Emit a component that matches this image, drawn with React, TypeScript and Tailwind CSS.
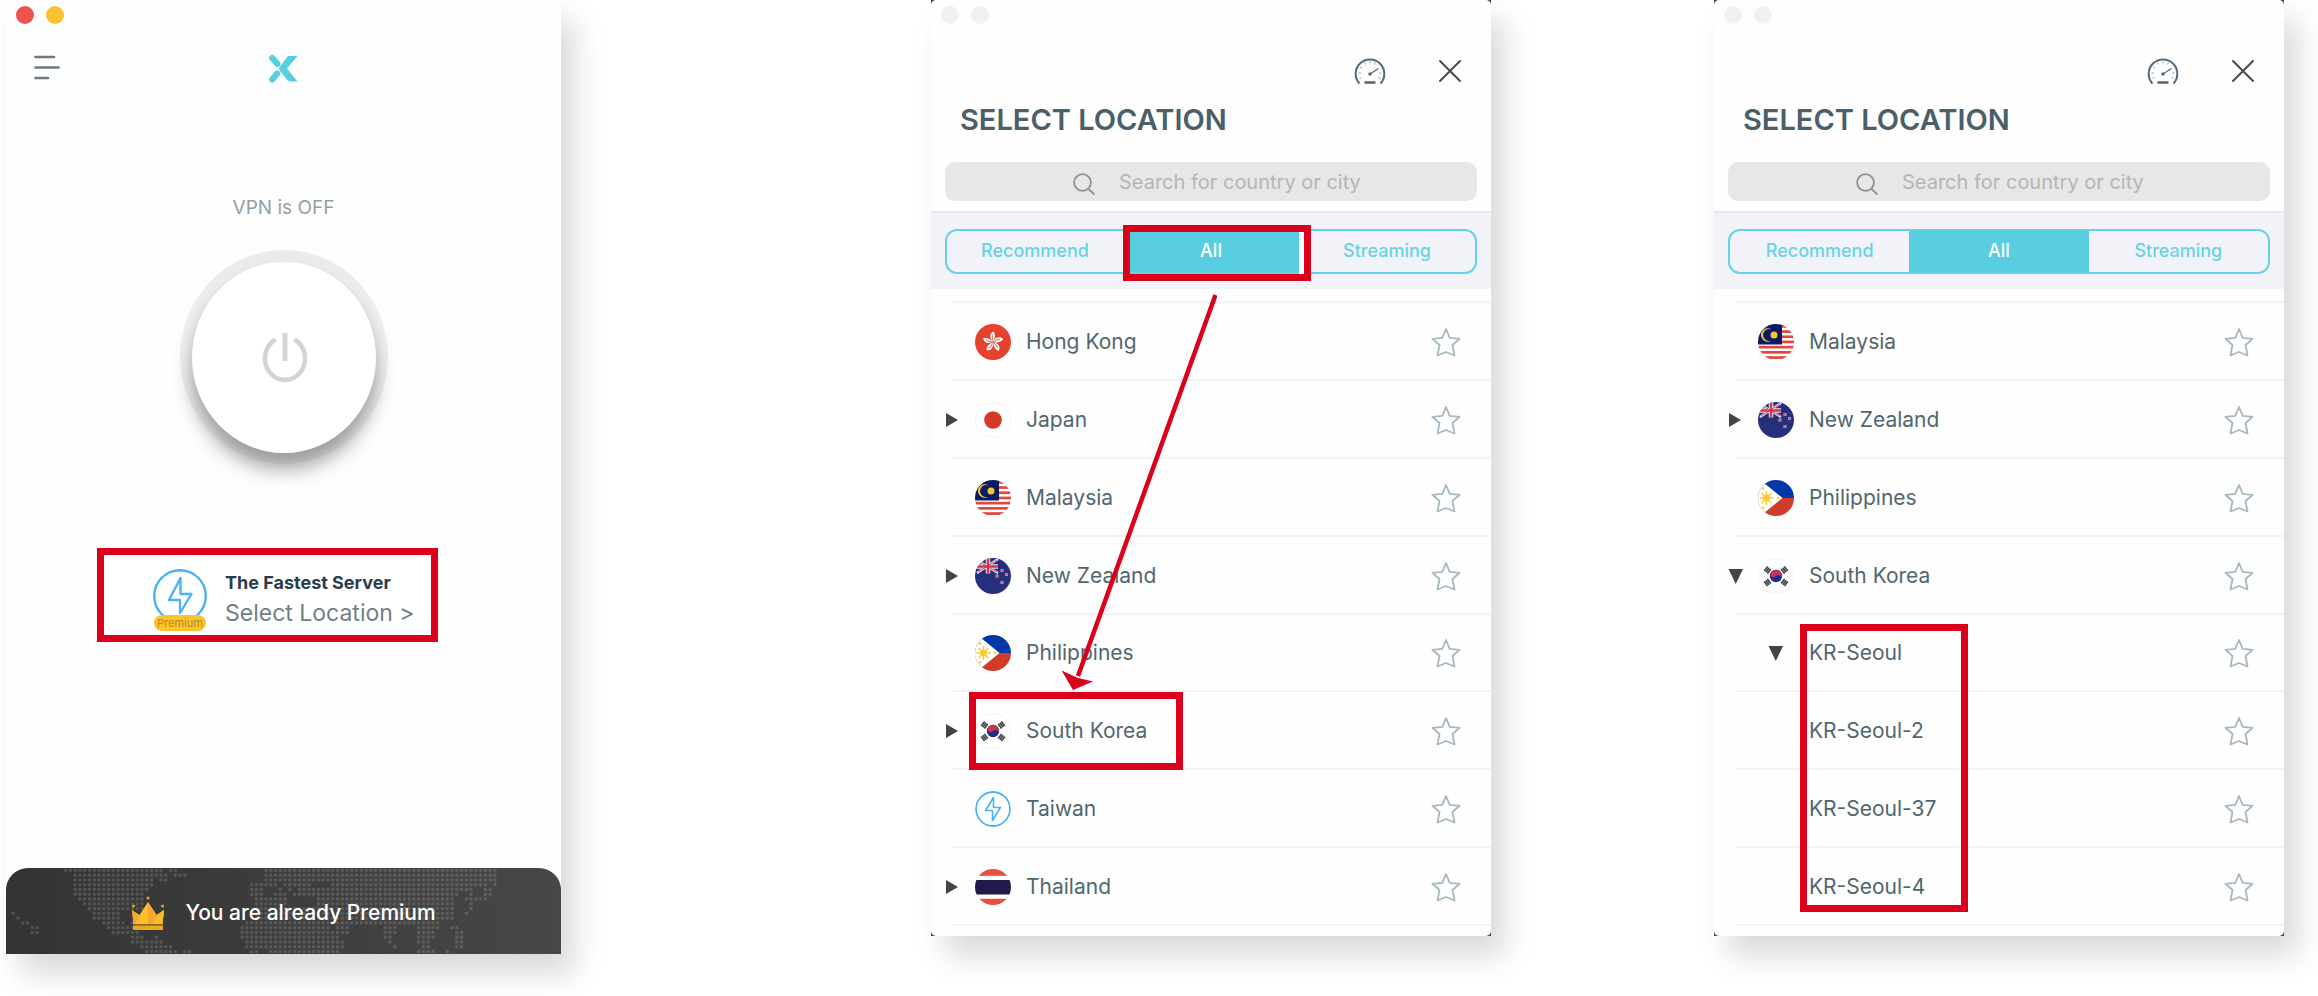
import { useState, type ReactNode } from "react";
import clsx from "clsx";

// ── Data ──────────────────────────────────────────────────────

type FlagCode = "hk" | "jp" | "my" | "nz" | "ph" | "kr" | "tw" | "th";

interface Place {
  name: string;
  flag?: FlagCode;
  arrow?: "right" | "down";
  nested?: boolean;
  mark?: string;
}

const TABS = ["Recommend", "All", "Streaming"];

const COUNTRIES: Place[] = [
  { name: "Hong Kong",   flag: "hk" },
  { name: "Japan",       flag: "jp", arrow: "right" },
  { name: "Malaysia",    flag: "my" },
  { name: "New Zealand", flag: "nz", arrow: "right" },
  { name: "Philippines", flag: "ph" },
  { name: "South Korea", flag: "kr", arrow: "right", mark: "left-[17px] top-0 h-[78px] w-[214px]" },
  { name: "Taiwan",      flag: "tw" },
  { name: "Thailand",    flag: "th", arrow: "right" },
];

const SERVERS: Place[] = [
  { name: "Malaysia",    flag: "my" },
  { name: "New Zealand", flag: "nz", arrow: "right" },
  { name: "Philippines", flag: "ph" },
  { name: "South Korea", flag: "kr", arrow: "down" },
  { name: "KR-Seoul",    arrow: "down", nested: true, mark: "left-[65px] top-[9px] h-[288px] w-[168px]" },
  { name: "KR-Seoul-2",  nested: true },
  { name: "KR-Seoul-37", nested: true },
  { name: "KR-Seoul-4",  nested: true },
];

// Dotted world map: per row, the first and last column of each run of dots
const MAP_ROWS: [number, number][][] = [
  [[12, 32], [34, 35], [54, 102]],
  [[14, 33], [35, 37], [54, 102]],
  [[14, 30], [32, 33], [54, 102]],
  [[14, 30], [51, 56], [58, 63], [68, 100], [102, 102]],
  [[14, 29], [51, 53], [57, 57], [59, 59], [61, 97], [100, 101]],
  [[14, 28], [51, 53], [56, 58], [60, 94], [97, 97], [100, 101]],
  [[15, 28], [52, 58], [65, 93], [96, 100]],
  [[16, 28], [52, 58], [65, 93], [97, 97]],
  [[17, 28], [52, 93], [97, 97]],
  [[1, 1], [18, 23], [51, 93], [96, 96]],
  [[2, 2], [18, 23], [51, 93]],
  [[3, 4], [20, 24], [26, 27], [50, 90]],
  [[5, 6], [21, 27], [49, 67], [69, 71], [79, 81], [86, 90], [93, 94]],
  [[5, 6], [22, 27], [49, 71], [79, 81], [86, 89], [94, 95]],
  [[26, 28], [31, 31], [49, 69], [79, 80], [86, 89], [94, 95]],
  [[26, 32], [50, 70], [80, 80], [86, 88], [94, 95]],
  [[28, 34], [50, 70], [81, 81], [87, 88], [94, 95]],
  [[29, 35], [37, 38], [51, 52], [55, 69], [86, 89], [92, 92]],
];

// ── Icons ─────────────────────────────────────────────────────

const FLAGS: Record<FlagCode, ReactNode> = {
  hk: (
    <>
      <rect width="36" height="36" fill="#e6432f" />
      {[0, 72, 144, 216, 288].map(a => (
        <g key={a} transform={`rotate(${a} 18 18)`}>
          <path d="M18 17.5C14 14 14.5 9.5 18.5 7.5C20.5 10 20.5 14.5 18 17.5Z" fill="#fff" />
          <path d="M18 16.5C17 14.5 17 12.5 18 10.5" stroke="#e6432f" strokeWidth=".8" fill="none" />
        </g>
      ))}
    </>
  ),
  jp: (
    <>
      <circle cx="18" cy="18" r="17.5" fill="#fff" stroke="#f1f1f1" />
      <circle cx="18" cy="18" r="8.8" fill="#d33b29" />
    </>
  ),
  my: (
    <>
      <rect width="36" height="36" fill="#fff" />
      {[0, 5.2, 10.4, 15.6, 20.8, 26, 31.2].map(y => (
        <rect key={y} y={y + 1} width="36" height="2.7" fill="#e0483b" />
      ))}
      <rect width="24" height="20.5" fill="#0b1a66" />
      <path d="M13.5 5.5A6 6 0 1 0 13.5 16.5A6.7 6.7 0 1 1 13.5 5.5Z" fill="#f6c42c" />
      <circle cx="16" cy="11" r="3.5" fill="#f6c42c" />
    </>
  ),
  nz: (
    <>
      <rect width="36" height="36" fill="#252f7c" />
      <path d="M2 2L23 15M23 1L2 15" stroke="#e6e6f2" strokeWidth="2.4" />
      <path d="M13 0V15.5M0 8.5H23" stroke="#e6e6f2" strokeWidth="4.5" />
      <path d="M13 0V15.5M0 8.5H23" stroke="#d5384a" strokeWidth="2.5" />
      <path d="M3 3L22 14M22 2L3 14" stroke="#d5384a" strokeWidth=".9" />
      {[[27, 12.5], [22, 18], [31.5, 16.5], [27, 24.5]].map(([x, y]) => (
        <rect key={y} x={x - 1.2} y={y - 1.2} width="2.4" height="2.4" fill="#d3566f" stroke="#a9a9d4" strokeWidth=".6" />
      ))}
    </>
  ),
  ph: (
    <>
      <rect width="36" height="18" fill="#0038a8" />
      <rect y="18" width="36" height="18" fill="#d03c2a" />
      <path d="M0 -2L24.5 18L0 38Z" fill="#fff" />
      <path d="M8.5 11V25M1.5 18H15.5M3.5 13L13.5 23M13.5 13L3.5 23" stroke="#fcc935" strokeWidth="1.4" />
      <circle cx="8.5" cy="18" r="3.4" fill="#fcc935" />
      <circle cx="5" cy="8.5" r="1.3" fill="#fcc935" />
      <circle cx="5" cy="27.5" r="1.3" fill="#fcc935" />
      <circle cx="20" cy="18" r="1.3" fill="#fcc935" />
    </>
  ),
  kr: (
    <>
      <circle cx="18" cy="18" r="17.5" fill="#fff" stroke="#f1f1f1" />
      <circle cx="18" cy="18" r="6.2" fill="#1d2f86" />
      <path d="M12.2 16A6.2 6.2 0 0 1 24 19.5C22.5 16.5 19.5 16.5 18 18C16 20 13 19.5 12.2 16Z" fill="#cf3545" />
      <g stroke="#444" strokeWidth="1.7">
        {[[9.5, 12, -52], [26.5, 12, 52], [9.5, 24.5, 52], [26.5, 24.5, -52]].map(([x, y, a]) => (
          <g key={`${x}-${y}`} transform={`translate(${x} ${y}) rotate(${a})`}>
            <path d="M-2.8 -2H2.8M-2.8 0H2.8M-2.8 2H2.8" />
          </g>
        ))}
      </g>
    </>
  ),
  tw: (
    <>
      <rect width="36" height="36" fill="#fff" />
      <circle cx="18" cy="18" r="17" fill="none" stroke="#4db2f5" strokeWidth="1.8" />
      <path d="M18.5 6.5L10.5 19.5H17.5V29.5L25.5 16.5H18.5Z" fill="none" stroke="#4db2f5" strokeWidth="1.6" strokeLinejoin="round" />
    </>
  ),
  th: (
    <>
      <rect width="36" height="36" fill="#fff" />
      <rect width="36" height="6.8" fill="#e94f3d" />
      <rect y="11" width="36" height="14.5" fill="#221a4d" />
      <rect y="29.8" width="36" height="7" fill="#e94f3d" />
    </>
  ),
};

function Flag({ code }: { code: FlagCode }) {
  return (
    <svg viewBox="0 0 36 36" className="size-9 rounded-full" aria-hidden="true">
      {FLAGS[code]}
    </svg>
  );
}

function Triangle({ dir }: { dir: "right" | "down" }) {
  return (
    <svg viewBox="0 0 16 16" className="size-4" aria-hidden="true">
      <path d={dir === "right" ? "M1 1V15L13 8Z" : "M0.5 1H15L7.8 16Z"} fill="#444" />
    </svg>
  );
}

function Star() {
  return (
    <svg viewBox="0 0 30 30" className="size-[30px]" aria-hidden="true">
      <path
        d="M15 2L18.7 10.8L28.6 11.8L21.5 18L23.5 28.5L15 25L6.5 28.5L8.5 18L1.4 11.8L11.3 10.8Z"
        fill="#fff" stroke="#a8b7c0" strokeWidth="1.8" strokeLinejoin="round"
      />
    </svg>
  );
}

function Gauge() {
  return (
    <svg viewBox="0 0 32 28" className="h-7 w-8" fill="none" stroke="#566a76" aria-hidden="true">
      <path d="M5.5 26.5A14.3 14.3 0 1 1 26.5 26.5" strokeWidth="2" />
      <path d="M10.5 25.5H21.5" strokeWidth="2.6" />
      <path d="M16 17L24.5 11.5" strokeWidth="1.2" />
      <circle cx="16" cy="17" r="1.8" fill="#566a76" stroke="none" />
      <path d="M16 4V6.5M10.5 5.5L11.5 7.5M21.5 5.5L20.5 7.5M6 10L8 11.2M4.5 16H7M25 16H27.5M5.5 21.5L7.5 20.8M26.5 21.5L24.5 20.8" strokeWidth="1" strokeOpacity=".6" />
    </svg>
  );
}

function Crown() {
  return (
    <svg viewBox="0 0 34 36" className="h-9 w-[34px]" aria-hidden="true">
      <path d="M1 15L8.5 20L17 7L25.5 20L33 15L31.5 29H2.5Z" fill="#fbc02d" />
      <path d="M17 7L25.5 20L33 15L31.5 29H17Z" fill="#f6a72c" />
      <path d="M1 15L8.5 22L4 29H2.5Z" fill="#f6a72c" />
      <path d="M25.5 21L33 15L31.5 29H22Z" fill="#fbb92d" />
      <rect x="2" y="29" width="30" height="1.4" fill="#8a6a1d" />
      <rect x="2" y="30.4" width="30" height="4.6" rx="1" fill="#eda91f" />
      <circle cx="17" cy="3" r="1.6" fill="#e9a11e" />
      <circle cx="2.5" cy="11" r="1.5" fill="#e9a11e" />
      <circle cx="31.5" cy="11" r="1.5" fill="#e9a11e" />
    </svg>
  );
}

function WorldDots() {
  return (
    <svg viewBox="0 0 555 86" preserveAspectRatio="none" className="absolute inset-0 size-full" aria-hidden="true">
      <defs>
        <pattern id="dot" width="4.77" height="4.77" patternUnits="userSpaceOnUse">
          <rect x=".9" y=".9" width="3" height="3" fill="#fff" fillOpacity=".15" />
        </pattern>
      </defs>
      {MAP_ROWS.flatMap((runs, row) =>
        runs.map(([from, to]) => (
          <rect key={`${row}-${from}`} x={from * 4.77} y={row * 4.77} width={(to - from + 1) * 4.77} height={4.77} fill="url(#dot)" />
        )),
      )}
    </svg>
  );
}

// ── Shared pieces ─────────────────────────────────────────────

function WindowDots({ colors }: { colors: string[] }) {
  return (
    <div className="flex gap-3 pt-[6px] pl-[10px]">
      {colors.map((color, i) => <span key={i} className={clsx("size-[18px] rounded-full", color)} />)}
    </div>
  );
}

function Marker({ className }: { className: string }) {
  return <span className={clsx("pointer-events-none absolute z-10 border-7 border-[#db001b]", className)} />;
}

// ── Home window ───────────────────────────────────────────────

function HomeWindow() {
  return (
    <section className="mb-[42px] flex flex-col bg-[#fefefe] shadow-[14px_20px_28px_rgba(0,0,0,0.15)]">
      <WindowDots colors={["bg-[#ef5350]", "bg-[#f9c22e]"]} />

      <header className="mt-[30px] grid grid-cols-3 items-center px-7">
        <button aria-label="Menu" className="justify-self-start">
          <svg viewBox="0 0 27 27" className="size-[27px]" stroke="#6b7985" strokeWidth="2.6" strokeLinecap="round">
            <path d="M1.5 2H20M1.5 12.5H24.5M1.5 23H14" />
          </svg>
        </button>
        <svg viewBox="0 0 30 29" className="h-[29px] w-[30px] justify-self-center" fill="#57cfe1" aria-label="X-VPN">
          <path d="M20 2H29.5L19 14.5L29.5 27.5H22.5Q20.5 27.5 19 25.7L11.5 16.2Q10.3 14.5 11.5 13Z" />
          <path d="M4.2 4L9.3 9.8M4.2 25.5L9.3 19.5" stroke="#57cfe1" strokeWidth="6.2" strokeLinecap="round" />
        </svg>
      </header>

      <p className="mt-[111px] text-center text-[19px]/7 text-[#93a0a7]">VPN is OFF</p>

      <button
        aria-label="Connect"
        className="mt-7 h-[214px] w-[208px] self-center rounded-[50%] bg-linear-to-b from-[#ebebeb] via-[#f2f2f2] to-[#e6e6e6]/40 px-3 pt-3 pb-[11px]"
      >
        <span className="flex size-full items-center justify-center rounded-[50%] bg-white shadow-[0_16px_20px_rgba(0,0,0,0.36)]">
          <svg viewBox="0 0 46 50" className="h-[50px] w-[46px]" fill="none" stroke="#d4d4d4" strokeWidth="4.6">
            <path d="M14.5 6.5A20 21.5 0 1 0 33.5 6.5" />
            <path d="M24 0V28" strokeWidth="5" />
          </svg>
        </span>
      </button>

      <button className="mt-[84px] ml-[91px] flex h-[94px] w-[341px] gap-[18px] border-7 border-[#db001b] bg-white pt-[14px] pl-[49px] text-left">
        <span className="flex w-[54px] flex-col items-center">
          <svg viewBox="0 0 54 54" className="size-[54px] shrink-0" fill="none" stroke="#4db2f5" strokeLinejoin="round" aria-hidden="true">
            <circle cx="27" cy="27" r="25.8" strokeWidth="2.4" />
            <path d="M27.500 9L16 31H27V44L38.500 25H27.500Z" strokeWidth="2.4" />
          </svg>
          <span className="z-10 -mt-2 w-[52px] rounded-full bg-[#fbc42f] text-center text-[11px]/[16px] text-[#b98a1c]">Premium</span>
        </span>
        <span>
          <span className="block text-lg/7 font-bold text-[#2b3c4c]">The Fastest Server</span>
          <span className="block text-[23px]/8 text-[#6f7f87]">Select Location &gt;</span>
        </span>
      </button>

      <footer className="relative mt-auto flex h-[86px] items-center justify-center gap-5 overflow-hidden rounded-t-[22px] bg-linear-to-r from-[#333] to-[#474747] pt-1">
        <WorldDots />
        <span className="relative"><Crown /></span>
        <span className="relative text-[21px]/8 font-medium text-white">You are already Premium</span>
      </footer>
    </section>
  );
}

// ── Location window ───────────────────────────────────────────

function PlaceRow({ place }: { place: Place }) {
  const [starred, setStarred] = useState(false);
  const toggle = place.arrow && (
    <button aria-label={`Expand ${place.name}`}><Triangle dir={place.arrow} /></button>
  );

  return (
    <li className="relative ml-[21px] flex flex-1 items-center border-t-2 border-[#f3f3f3] pt-[2px] pr-[30px] last:border-b-2">
      <span className="-ml-[7px] flex w-[30px]">{!place.nested && toggle}</span>
      <span className="flex w-9 justify-center">
        {place.flag ? <Flag code={place.flag} /> : toggle}
      </span>
      <span className="ml-[15px] flex-1 text-[21px]/7 text-[#52666f]">{place.name}</span>
      <button aria-label={`Favourite ${place.name}`} aria-pressed={starred} onClick={() => setStarred(!starred)}>
        <Star />
      </button>
      {place.mark && <Marker className={place.mark} />}
    </li>
  );
}

interface LocationProps {
  id: string;
  places: Place[];
  className: string;
  markTab?: boolean;
  children?: ReactNode;
}

function LocationWindow({ id, places, className, markTab, children }: LocationProps) {
  const [tab, setTab] = useState("All");

  return (
    <section className={clsx("relative mb-[60px] bg-[#444] shadow-[14px_20px_28px_rgba(0,0,0,0.15)]", className)}>
      <div className="flex h-full flex-col rounded-[5px] bg-[#fefefe] pb-[10px]">
        <WindowDots colors={["bg-[#f1f1f1]", "bg-[#f1f1f1]"]} />

        <div className="mt-[33px] flex items-center justify-end gap-[52px] pr-[29px]">
          <button aria-label="Speed test"><Gauge /></button>
          <button aria-label="Close">
            <svg viewBox="0 0 24 24" className="size-6" stroke="#4a4a4a" strokeWidth="2" strokeLinecap="round">
              <path d="M2 2L22 22M22 2L2 22" />
            </svg>
          </button>
        </div>

        <h2 className="mt-[17px] ml-[29px] text-[29px]/9 font-semibold text-[#4a5f69]">SELECT LOCATION</h2>

        <label htmlFor={id} className="mx-[14px] mt-6 flex h-[39px] items-center gap-6 rounded-[10px] bg-[#e7e7e7] pl-32">
          <svg viewBox="0 0 22 22" className="mt-1 size-[22px] shrink-0" fill="none" stroke="#8f8f8f" strokeWidth="1.8">
            <circle cx="9.5" cy="9.5" r="8.4" />
            <path d="M15.5 16L21.5 21.5" />
          </svg>
          <input id={id} placeholder="Search for country or city" className="min-w-0 flex-1 text-xl/7 text-[#52666f] outline-none placeholder:text-[#b5b5b5]" />
        </label>

        <div className="mt-[10px] border-t-2 border-[#e5e7ed] bg-[#f2f3f8] px-[14px] pt-4 pb-[15px]">
          <div className="grid h-[45px] grid-cols-3 rounded-xl border-2 border-[#66d3e5]">
            {TABS.map(name => (
              <button
                key={name}
                onClick={() => setTab(name)}
                className={clsx("relative pb-[2px] text-lg/6 font-medium", name === tab ? "bg-[#58cee0] text-white" : "text-[#66d3e5]")}
              >
                {name}
                {markTab && name === "All" && (
                  <Marker className="-top-[6px] left-0 h-[56px] w-[188px] shadow-[inset_-5px_0_0_#fff]" />
                )}
              </button>
            ))}
          </div>
        </div>

        <ul className="mt-3 flex flex-1 flex-col">
          {places.map(place => <PlaceRow key={place.name} place={place} />)}
        </ul>
      </div>
      {children}
    </section>
  );
}

// ── Page ──────────────────────────────────────────────────────

export default function App() {
  return (
    <main className="grid min-h-screen grid-cols-[555fr_370fr_560fr_223fr_570fr] bg-white pr-[34px] pl-[6px] font-['Inter',sans-serif]">
      <HomeWindow />

      <LocationWindow id="search-country" places={COUNTRIES} className="col-start-3" markTab>
        <svg viewBox="0 0 156 396" className="pointer-events-none absolute top-[294px] left-[130px] z-20 h-[396px] w-[156px]" aria-hidden="true">
          <path d="M154.500 1L17 382" stroke="#db001b" strokeWidth="4.5" />
          <path d="M0.600 376.500L12 396L32 387.500L17 384Z" fill="#db001b" />
        </svg>
      </LocationWindow>

      <LocationWindow id="search-server" places={SERVERS} className="col-start-5" />
    </main>
  );
}
